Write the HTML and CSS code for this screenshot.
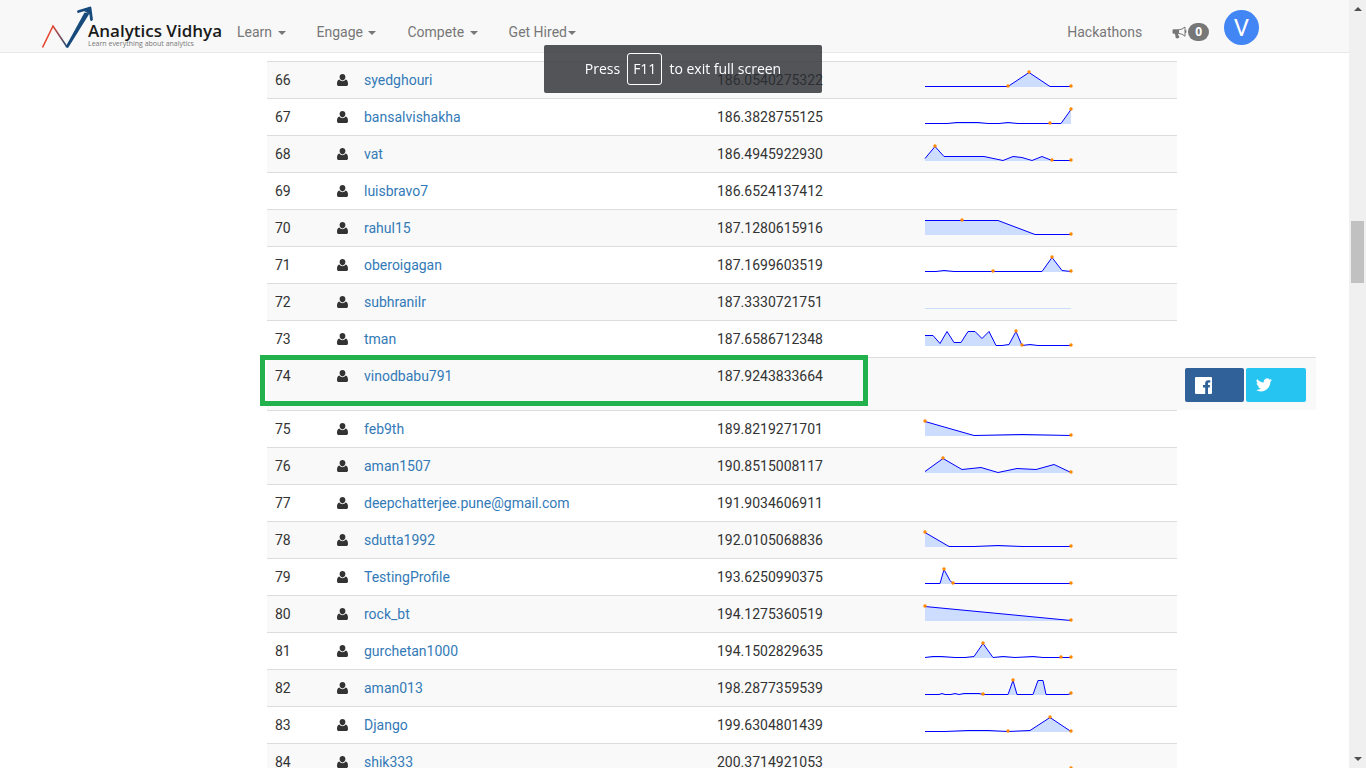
FILE: index.html
```html
<!DOCTYPE html>
<html lang="en">
<head>
<meta charset="utf-8">
<title>Analytics Vidhya - Leaderboard</title>
<link rel="stylesheet" href="styles.css">
</head>
<body>
<svg class="defs" aria-hidden="true">
  <symbol id="user" viewBox="0 0 11 12"><path d="M5.5 0C7.2 0 8.4 1.3 8.4 3.1S7.2 6.4 5.5 6.4 2.6 4.9 2.6 3.1 3.8 0 5.5 0zM2.4 5.6C3.2 6.7 4.2 7.2 5.5 7.2S7.8 6.7 8.6 5.6C10.4 5.9 11 7.7 11 9.9 11 11.200 10.300 12 9 12H2C.7 12 0 11.200 0 9.900 0 7.700.6 5.900 2.400 5.600z"/></symbol>
</svg>
<div class="page">
  <nav class="navbar">
    <a class="brand" href="#">
      <svg class="brand-mark" viewBox="0 0 52 44" aria-hidden="true">
        <defs><linearGradient id="rise" x1="0" x2="1"><stop offset="0" stop-color="#e8452f"/><stop offset=".4" stop-color="#e8452f"/><stop offset="1" stop-color="#1c4a78"/></linearGradient></defs>
        <path d="M1.500 42.500L12 21 26 42" fill="none" stroke="url(#rise)" stroke-width="1.600"/>
        <path d="M24.500 42L43.500 7.500 48.500 8.500 27 43z" fill="#17497b"/>
        <path d="M37.500 6.500L49 3 50.500 14.500" fill="none" stroke="#17497b" stroke-width="2.800" stroke-linecap="round" stroke-linejoin="round"/>
        <path d="M43 6L49 3 50 10z" fill="#17497b"/>
      </svg>
      <span class="brand-words"><span class="brand-name">Analytics Vidhya</span><span class="brand-tag">Learn everything about analytics</span></span>
    </a>
    <div class="menu">
      <a href="#">Learn <span class="caret"></span></a>
      <a href="#">Engage <span class="caret"></span></a>
      <a href="#">Compete <span class="caret"></span></a>
      <a href="#" class="tight">Get Hired<span class="caret"></span></a>
    </div>
    <div class="account">
      <a href="#">Hackathons</a>
      <a href="#" class="alerts" aria-label="Notifications">
        <svg class="horn" viewBox="0 0 14 13" aria-hidden="true"><path d="M1.200 3.300H6.500V7.800H1.200Q0 7.800 0 6.600V4.500Q0 3.300 1.200 3.300zM2.400 7.500H5.200L7 11.600Q5 13 3.300 12z" fill="#777"/><path d="M6 3.900Q9.500 3.700 12.500 1V10.200Q9.500 7.500 6 7.400" fill="none" stroke="#777" stroke-width="1"/><path d="M13.200 4.200V6.800" stroke="#777" stroke-width="1.400"/></svg><span class="badge">0</span></a>
      <a href="#" class="avatar">V</a>
    </div>
  </nav>

  <main class="content">
    <table class="board">
      <colgroup><col class="c-rank"><col class="c-icon"><col class="c-name"><col class="c-score"><col class="c-chart"><col class="c-share"></colgroup>
      <tbody>
        <tr><td>66</td><td><svg class="user"><use href="#user"/></svg></td><td><a href="#">syedghouri</a></td><td>186.0540275322</td><td><svg class="spark" data-line="2,16 85,16 106,2 127,16 148,16" data-dots="85,16 106,2 148,16"></svg></td></tr>
        <tr><td>67</td><td><svg class="user"><use href="#user"/></svg></td><td><a href="#">bansalvishakha</a></td><td>186.3828755125</td><td><svg class="spark" data-line="2,16 24,16 34,15 55,15 65,16 76,16 85,15 95,16 138,16 148,2" data-dots="127,16 148,2"></svg></td></tr>
        <tr><td>68</td><td><svg class="user"><use href="#user"/></svg></td><td><a href="#">vat</a></td><td>186.4945922930</td><td><svg class="spark" data-line="2,14 12,2 21,12 61,12 80,16 90,12 99,13 109,16 119,12 129,16 148,16" data-dots="12,2 129,16 148,16"></svg></td></tr>
        <tr><td>69</td><td><svg class="user"><use href="#user"/></svg></td><td><a href="#">luisbravo7</a></td><td>186.6524137412</td><td></td></tr>
        <tr><td>70</td><td><svg class="user"><use href="#user"/></svg></td><td><a href="#">rahul15</a></td><td>187.1280615916</td><td><svg class="spark" data-line="2,2 75,2 112,16 148,16" data-dots="39,2 148,16"></svg></td></tr>
        <tr><td>71</td><td><svg class="user"><use href="#user"/></svg></td><td><a href="#">oberoigagan</a></td><td>187.1699603519</td><td><svg class="spark" data-line="2,16 13,16 21,15 31,16 119,16 129,2 139,15 148,16" data-dots="70,16 129,2 148,16"></svg></td></tr>
        <tr><td>72</td><td><svg class="user"><use href="#user"/></svg></td><td><a href="#">subhranilr</a></td><td>187.3330721751</td><td><svg class="spark flat" data-line="2,16 148,16" data-dots=""></svg></td></tr>
        <tr><td>73</td><td><svg class="user"><use href="#user"/></svg></td><td><a href="#">tman</a></td><td>187.6586712348</td><td><svg class="spark" data-line="2,6 10,6 17,14 24,2 31,13 38,13 45,2 52,2 59,9 66,2 73,16 79,16 86,15 93,2 99,16 107,15 115,16 148,16" data-dots="93,2 99,16 148,16"></svg></td></tr>
        <tr class="mine"><td><span class="highlight"></span>74</td><td><svg class="user"><use href="#user"/></svg></td><td><a href="#">vinodbabu791</a></td><td>187.9243833664</td><td></td>
          <td class="share"><div class="share-row">
            <button class="fb" type="button" aria-label="Share on Facebook"><svg width="17" height="17" viewBox="0 0 17 17"><path fill="#fff" d="M1 0H16Q17 0 17 1V16Q17 17 16 17H13V10.500H14.700L15 8H13V6.600Q13 5.500 14.100 5.500H15.300V3.300H13.300Q10.200 3.300 10.200 6.300V8H8V10.500H10.200V17H1Q0 17 0 16V1Q0 0 1 0z"/></svg></button>
            <button class="tw" type="button" aria-label="Share on Twitter"><svg width="16" height="14" viewBox="0 0 24 20"><path fill="#fff" d="M24 2.400a9.800 9.800 0 0 1-2.800.8A5 5 0 0 0 23.300.5a9.800 9.800 0 0 1-3.100 1.200 4.900 4.900 0 0 0-8.400 4.500A14 14 0 0 1 1.700 1a4.900 4.900 0 0 0 1.500 6.600A4.900 4.900 0 0 1 1 7v.1a4.900 4.900 0 0 0 4 4.800 5 5 0 0 1-2.200.1 4.900 4.900 0 0 0 4.600 3.400A9.900 9.900 0 0 1 0 17.500a14 14 0 0 0 7.500 2.200c9.100 0 14.300-7.700 14-14.600A10 10 0 0 0 24 2.400z"/></svg></button>
          </div></td></tr>
        <tr><td>75</td><td><svg class="user"><use href="#user"/></svg></td><td><a href="#">feb9th</a></td><td>189.8219271701</td><td><svg class="spark" data-line="2,2 51,16 99,15 148,16" data-dots="2,2 148,16"></svg></td></tr>
        <tr><td>76</td><td><svg class="user"><use href="#user"/></svg></td><td><a href="#">aman1507</a></td><td>190.8515008117</td><td><svg class="spark" data-line="2,15 20,2 39,13 58,11 75,16 94,12 113,13 131,8 148,16" data-dots="20,2 148,16"></svg></td></tr>
        <tr><td>77</td><td><svg class="user"><use href="#user"/></svg></td><td><a href="#">deepchatterjee.pune@gmail.com</a></td><td>191.9034606911</td><td></td></tr>
        <tr><td>78</td><td><svg class="user"><use href="#user"/></svg></td><td><a href="#">sdutta1992</a></td><td>192.0105068836</td><td><svg class="spark" data-line="2,2 26,16 51,16 75,15 99,16 148,16" data-dots="2,2 148,16"></svg></td></tr>
        <tr><td>79</td><td><svg class="user"><use href="#user"/></svg></td><td><a href="#">TestingProfile</a></td><td>193.6250990375</td><td><svg class="spark" data-line="2,16 17,16 21,2 27,13 30,16 148,16" data-dots="21,2 30,16 148,16"></svg></td></tr>
        <tr><td>80</td><td><svg class="user"><use href="#user"/></svg></td><td><a href="#">rock_bt</a></td><td>194.1275360519</td><td><svg class="spark" data-line="2,2 148,16" data-dots="2,2 148,16"></svg></td></tr>
        <tr><td>81</td><td><svg class="user"><use href="#user"/></svg></td><td><a href="#">gurchetan1000</a></td><td>194.1502829635</td><td><svg class="spark" data-line="2,16 10,15 18,15 32,16 42,16 51,15 60,2 70,16 80,15 92,16 110,15 120,16 148,16" data-dots="60,2 138,16 148,16"></svg></td></tr>
        <tr><td>82</td><td><svg class="user"><use href="#user"/></svg></td><td><a href="#">aman013</a></td><td>198.2877359539</td><td><svg class="spark" data-line="2,16 16,16 19,15 22,16 28,16 32,15 36,16 41,15 56,15 60,16 85,16 90,2 94,16 110,16 115,2 120,2 123,16 145,16 148,15" data-dots="60,16 90,2 148,15"></svg></td></tr>
        <tr><td>83</td><td><svg class="user"><use href="#user"/></svg></td><td><a href="#">Django</a></td><td>199.6304801439</td><td><svg class="spark" data-line="2,16 22,16 45,15 65,15 85,16 107,15 127,2 148,16" data-dots="85,16 127,2 148,16"></svg></td></tr>
        <tr><td>84</td><td><svg class="user"><use href="#user"/></svg></td><td><a href="#">shik333</a></td><td>200.3714921053</td><td><svg class="spark" data-line="" data-dots="148,16"></svg></td></tr>
      </tbody>
    </table>
  </main>
</div>
<div class="scrollbar" aria-hidden="true"><span class="arrow up"></span><span class="thumb"></span><span class="arrow down"></span></div>
<div class="toast"><span>Press</span><kbd>F11</kbd><span>to exit full screen</span></div>
<script src="spark.js"></script>
</body>
</html>
```
FILE: styles.css
```css
* { box-sizing: border-box; }
body {
  margin: 0;
  display: flex;
  height: 100vh;
  overflow: hidden;
  background: #fff;
  color: #333;
  font: 14px/20px Roboto, "Liberation Sans", sans-serif;
}
a { color: #337ab7; text-decoration: none; }
.defs { position: absolute; width: 0; height: 0; }
.page { flex: 1; min-width: 0; overflow: hidden; }

/* Top bar */
.navbar {
  display: flex;
  height: 53px;
  padding: 0 90px 0 41px;
  background: #f8f8f8;
  border-bottom: 1px solid #e7e7e7;
}
.navbar a { color: #777; }
.brand { display: flex; width: 181px; padding-top: 5px; }
.brand-mark { flex: none; width: 52px; height: 44px; }
.brand-words { display: flex; flex-direction: column; margin-left: -5px; padding-top: 17px; white-space: nowrap; }
.brand-name { color: #1a1a1a; font: 600 17px/18px "Open Sans", sans-serif; }
.brand-tag { color: #777; font: 7px/8px "Open Sans", sans-serif; }
.menu, .account { display: flex; padding-top: 22px; }
.menu { gap: 1px; }
.menu a { padding: 0 15px; white-space: nowrap; }
.caret {
  display: inline-block;
  margin-left: 2px;
  vertical-align: middle;
  border: 4px solid transparent;
  border-top-color: #777;
  border-bottom: 0;
}
.tight .caret { margin-left: 1px; }
.account { margin-left: auto; }
.alerts { display: flex; margin: 0 15px 0 30px; }
.horn { width: 15px; height: 13px; margin-top: 4px; }
.badge {
  height: 18px;
  margin: 1px 0 0 1px;
  padding: 0 7px;
  border-radius: 9px;
  background: #777;
  color: #fff;
  font: bold 12px/18px "Open Sans", sans-serif;
}
.navbar .avatar {
  width: 35px;
  height: 35px;
  margin-top: -12px;
  border-radius: 50%;
  background: #4285f4;
  color: #fff;
  font-size: 24px;
  line-height: 37px;
  text-align: center;
}

/* Leaderboard */
.content { padding: 8px 33px 0 267px; }
.board { width: 100%; table-layout: fixed; border-collapse: separate; border-spacing: 0; }
.c-rank { width: 62px; }
.c-icon { width: 27px; }
.c-score { width: 208px; }
.c-chart { width: 260px; }
.c-share { width: 139px; }
.board td { height: 37px; padding: 8px; border-top: 1px solid #ddd; vertical-align: top; }
.board tr:nth-child(odd) td { background: #f9f9f9; }
.board .mine td { height: 53px; }
.user { display: block; width: 11px; height: 12px; margin-top: 4px; fill: #333; }
.spark { display: block; width: 150px; height: 20px; margin-left: -2px; overflow: visible; }
.spark .area { fill: #cdf; }
.spark .line { fill: none; stroke: #00f; stroke-width: 1; }
.flat .line { stroke: #cdf; }
.spark .dot { fill: #f80; }
.mine td:first-child { position: relative; }
.highlight {
  position: absolute;
  left: -7px;
  top: -3px;
  z-index: 1;
  width: 608px;
  height: 51px;
  border: 5px solid #22b14c;
}
.share-row { display: flex; gap: 2px; padding-top: 2px; }
.share-row button { display: flex; align-items: center; height: 34px; padding: 0 10px; border: 0; border-radius: 2px; }
.share-row .fb { width: 59px; background: #306199; }
.share-row .tw { width: 60px; background: #26c4f1; }

/* Window scroll bar */
.scrollbar { display: flex; flex-direction: column; align-items: center; width: 17px; padding: 7px 0; background: #f0f0f0; }
.arrow { border: 4px solid transparent; }
.up { border-top: 0; border-bottom-color: #505050; }
.down { margin-top: auto; border-bottom: 0; border-top-color: #505050; }
.thumb { width: 13px; height: 62px; margin-top: 210px; background: #c1c1c1; }

/* Full-screen hint */
.toast {
  position: fixed;
  top: 45px;
  left: 50%;
  transform: translateX(-50%);
  display: flex;
  align-items: center;
  justify-content: center;
  gap: 7px;
  width: 278px;
  height: 48px;
  border-radius: 2px;
  background: rgba(43, 46, 51, .81);
  color: #fff;
  font: 14px/20px "Open Sans", sans-serif;
  white-space: nowrap;
}
.toast kbd { padding: 5px; border: 1px solid #fff; border-radius: 3px; font: inherit; }
```
FILE: spark.js
```js
// Draws each sparkline from its points: filled area, line and marker dots.
const NS = "http://www.w3.org/2000/svg";
function add(svg, tag, attrs) {
  const el = document.createElementNS(NS, tag);
  for (const key in attrs) el.setAttribute(key, attrs[key]);
  svg.appendChild(el);
}
function parse(text) {
  return text.split(" ").filter(Boolean).map(p => {
    const [x, y] = p.split(",").map(Number);
    return [x, y + 0.5];
  });
}
document.querySelectorAll(".spark").forEach(svg => {
  const line = parse(svg.dataset.line);
  if (line.length) {
    const last = line[line.length - 1];
    add(svg, "polygon", { class: "area", points: [[line[0][0], 17], ...line, [last[0], 17]].join(" ") });
    add(svg, "polyline", { class: "line", points: line.join(" ") });
  }
  parse(svg.dataset.dots).forEach(([x, y]) => add(svg, "circle", { class: "dot", cx: x, cy: y - 0.5, r: 1.7 }));
});
```
